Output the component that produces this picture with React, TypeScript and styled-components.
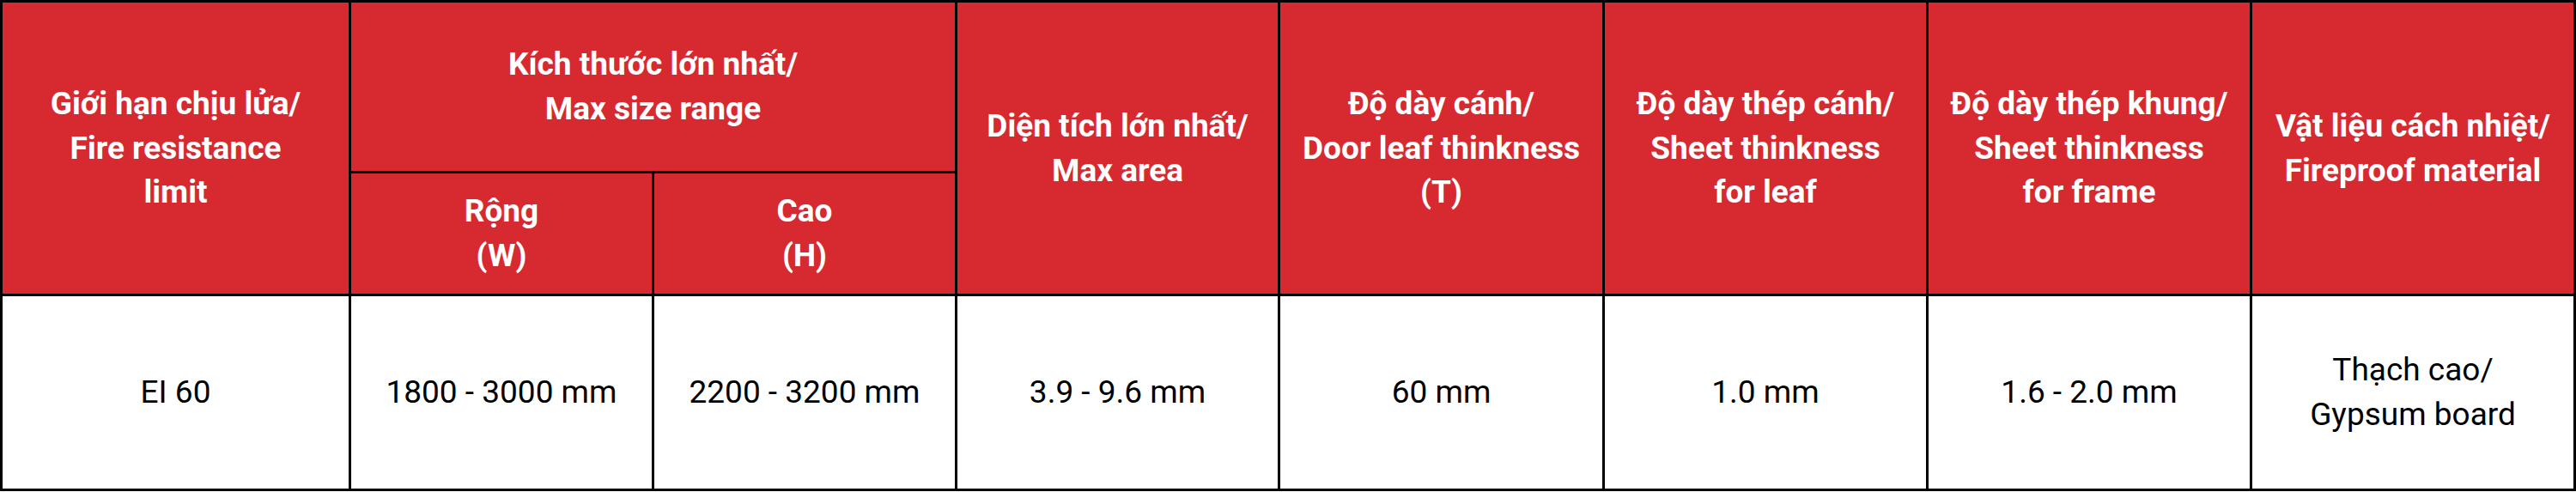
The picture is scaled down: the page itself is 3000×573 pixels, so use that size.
import { FC } from "react";
import styled, { createGlobalStyle } from "styled-components";

// bảng thông số cửa chống cháy
// widths / heights are measured from the screenshot (3000px wide)

const GlobalStyle = createGlobalStyle`
  html, body {
    margin: 0;
    padding: 0;
    background: #ffffff;
  }
  body {
    font-family: Roboto, "Noto Sans", "Liberation Sans", sans-serif;
  }
`;

const colWidths = [406, 353, 353, 376, 378, 377, 377, 377];

const headRight: string[][] = [
  ["Diện tích lớn nhất/", "Max area"],
  ["Độ dày cánh/", "Door leaf thinkness", "(T)"],
  ["Độ dày thép cánh/", "Sheet thinkness", "for leaf"],
  ["Độ dày thép khung/", "Sheet thinkness", "for frame"],
  ["Vật liệu cách nhiệt/", "Fireproof material"],
];

const bodyRow: string[][] = [
  ["EI 60"],
  ["1800 - 3000 mm"],
  ["2200 - 3200 mm"],
  ["3.9 - 9.6 mm"],
  ["60 mm"],
  ["1.0 mm"],
  ["1.6 - 2.0 mm"],
  ["Thạch cao/", "Gypsum board"],
];

const Table = styled.table`
  width: 3000px;
  border-collapse: collapse;
  table-layout: fixed;
  font-size: 37px;
  line-height: 51.7px;
`;

const HeadCell = styled.th<{ $h?: number }>`
  background: #d62930;
  color: #ffffff;
  font-weight: 700;
  text-align: center;
  vertical-align: middle;
  border: 3px solid #000000;
  padding: 0 4px;
  height: ${(p) => (p.$h ? `${p.$h}px` : "auto")};
  box-sizing: border-box;
`;

const BodyCell = styled.td`
  color: #000000;
  font-weight: 400;
  text-align: center;
  vertical-align: middle;
  border: 3px solid #000000;
  padding: 0 4px;
  height: 227px;
  box-sizing: border-box;
`;

const Line = styled.span`
  display: block;
  white-space: nowrap;
`;

const Lines: FC<{ items: string[] }> = ({ items }) => (
  <>
    {items.map((t, i) => (
      <Line key={i}>{t}</Line>
    ))}
  </>
);

export default function App() {
  return (
    <>
      <GlobalStyle />
      <Table>
        <colgroup>
          {colWidths.map((w, i) => (
            <col key={i} style={{ width: w }} />
          ))}
        </colgroup>
        <thead>
          <tr>
            <HeadCell rowSpan={2}>
              <Lines items={["Giới hạn chịu lửa/", "Fire resistance", "limit"]} />
            </HeadCell>
            <HeadCell colSpan={2} $h={199}>
              <Lines items={["Kích thước lớn nhất/", "Max size range"]} />
            </HeadCell>
            {headRight.map((h, i) => (
              <HeadCell key={i} rowSpan={2}>
                <Lines items={h} />
              </HeadCell>
            ))}
          </tr>
          <tr>
            <HeadCell $h={143}>
              <Lines items={["Rộng", "(W)"]} />
            </HeadCell>
            <HeadCell $h={143}>
              <Lines items={["Cao", "(H)"]} />
            </HeadCell>
          </tr>
        </thead>
        <tbody>
          <tr>
            {bodyRow.map((c, i) => (
              <BodyCell key={i}>
                <Lines items={c} />
              </BodyCell>
            ))}
          </tr>
        </tbody>
      </Table>
    </>
  );
}
